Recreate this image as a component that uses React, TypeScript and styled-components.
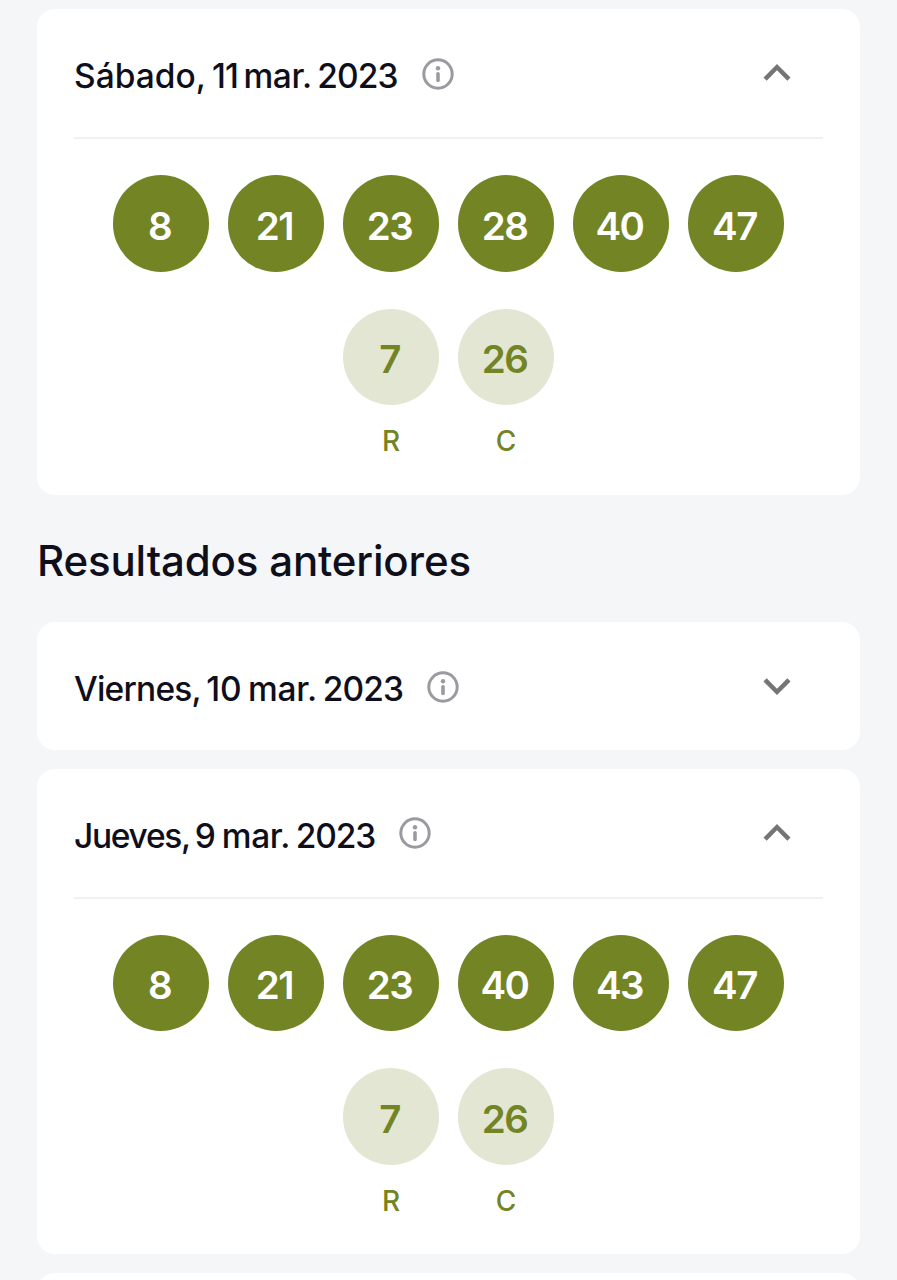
import styled, { createGlobalStyle } from "styled-components";

type TExtra = { value: number; label: string };

type TDraw = {
  day: string;
  date: string;
  month: string;
  year: string;
  spacing: number[];
  open?: boolean;
  numbers?: number[];
  extras?: TExtra[];
};

const extras: TExtra[] = [
  { value: 7, label: "R" },
  { value: 26, label: "C" },
];

const latest: TDraw = {
  day: "Sábado,",
  date: "11",
  month: "mar.",
  year: "2023",
  spacing: [0, -0.9, -0.4, -0.9],
  open: true,
  numbers: [8, 21, 23, 28, 40, 47],
  extras,
};

const previous: TDraw[] = [
  {
    day: "Viernes,",
    date: "10",
    month: "mar.",
    year: "2023",
    spacing: [-0.8, -0.1, -0.2, -0.9],
  },
  {
    day: "Jueves,",
    date: "9",
    month: "mar.",
    year: "2023",
    spacing: [-1.3, -0.2, -0.4, -1.1],
    open: true,
    numbers: [8, 21, 23, 40, 43, 47],
    extras,
  },
];

const InfoIcon = () => (
  <InfoSvg viewBox="0 0 32 32" fill="none">
    <circle cx="16" cy="16" r="14.2" stroke="currentColor" strokeWidth="3" />
    <circle cx="16" cy="10.2" r="2.2" fill="currentColor" />
    <path d="M16 15.8v6.7" stroke="currentColor" strokeWidth="3.6" strokeLinecap="round" />
  </InfoSvg>
);

const Chevron = ({ open }: { open?: boolean }) => (
  <ChevronSvg viewBox="0 0 24 24">
    <path
      d={
        open
          ? "M12 8l-6 6 1.41 1.41L12 10.83l4.59 4.58L18 14z"
          : "M16.59 8.59L12 13.17 7.41 8.59 6 10l6 6 6-6z"
      }
    />
  </ChevronSvg>
);

const DrawCard = ({ day, date, month, year, spacing, open, numbers, extras }: TDraw) => {
  return (
    <Card>
      <Header>
        <Title>
          {[day, date, month, year].map((word, i) => (
            <Word key={i} $spacing={spacing[i]}>
              {word}{" "}
            </Word>
          ))}
        </Title>
        <InfoIcon />
        <Chevron open={open} />
      </Header>
      {open && (
        <Body>
          <Row>
            {numbers?.map((n) => (
              <Ball key={n}>{n}</Ball>
            ))}
          </Row>
          <Row>
            {extras?.map(({ value, label }) => (
              <Extra key={label}>
                <Ball $light>{value}</Ball>
                <Label>{label}</Label>
              </Extra>
            ))}
          </Row>
        </Body>
      )}
    </Card>
  );
};

const App = () => {
  return (
    <Page>
      <GlobalStyle />
      <DrawCard {...latest} />
      <Heading>Resultados anteriores</Heading>
      <List>
        {previous.map((draw) => (
          <DrawCard key={draw.day} {...draw} />
        ))}
        <NextCard />
      </List>
    </Page>
  );
};

export default App;

const GlobalStyle = createGlobalStyle`
  * {
    box-sizing: border-box;
  }
  body {
    margin: 0;
    background-color: #f4f6f8;
    color: #0f0f1c;
    font-family: Inter, "Liberation Sans", sans-serif;
    font-weight: 500;
  }
`;

const Page = styled.main`
  height: 1280px;
  overflow: hidden;
  padding: 9px 37px 0;
`;

const List = styled.div`
  display: flex;
  flex-direction: column;
  gap: 18.5px;
`;

const Card = styled.section`
  background-color: #fff;
  border-radius: 18px;
  padding: 0 37px;
`;

const NextCard = styled(Card)`
  height: 128px;
`;

const Header = styled.header`
  align-items: center;
  display: flex;
  height: 128px;
  padding-right: 19px;
`;

const Title = styled.h3`
  font-size: 33.5px;
  font-weight: 500;
  line-height: 44px;
  margin: 6px 24px 0 0;
  white-space: nowrap;
  word-spacing: -2.5px;
`;

const Word = styled.span<{ $spacing: number }>`
  letter-spacing: ${({ $spacing }) => $spacing}px;
`;

const InfoSvg = styled.svg`
  color: #9a9aa0;
  flex: none;
  height: 32px;
  margin-top: 1px;
  width: 32px;
`;

const ChevronSvg = styled.svg`
  fill: #757575;
  height: 54px;
  margin-left: auto;
  width: 54px;
`;

const Body = styled.div`
  border-top: 2px solid #f0f1f3;
  display: flex;
  flex-direction: column;
  gap: 37px;
  height: 357.5px;
  padding-top: 36px;
`;

const Row = styled.div`
  display: flex;
  gap: 18.5px;
  justify-content: center;
`;

const Ball = styled.div<{ $light?: boolean }>`
  align-items: center;
  background-color: ${({ $light }) => ($light ? "#e2e6d3" : "#728424")};
  border-radius: 50%;
  color: ${({ $light }) => ($light ? "#728424" : "#fff")};
  display: flex;
  font-size: 38.5px;
  font-weight: 600;
  height: 96.5px;
  justify-content: center;
  letter-spacing: -1.5px;
  padding: 5px 3px 0 0;
  width: 96.5px;
`;

const Extra = styled.div`
  align-items: center;
  display: flex;
  flex-direction: column;
`;

const Label = styled.span`
  color: #728424;
  font-size: 28px;
  font-weight: 500;
  line-height: 36px;
  margin-top: 18px;
`;

const Heading = styled.h2`
  font-size: 42px;
  font-weight: 500;
  letter-spacing: -0.15px;
  line-height: 56px;
  margin: 0;
  padding: 38px 0 33.5px;
`;
